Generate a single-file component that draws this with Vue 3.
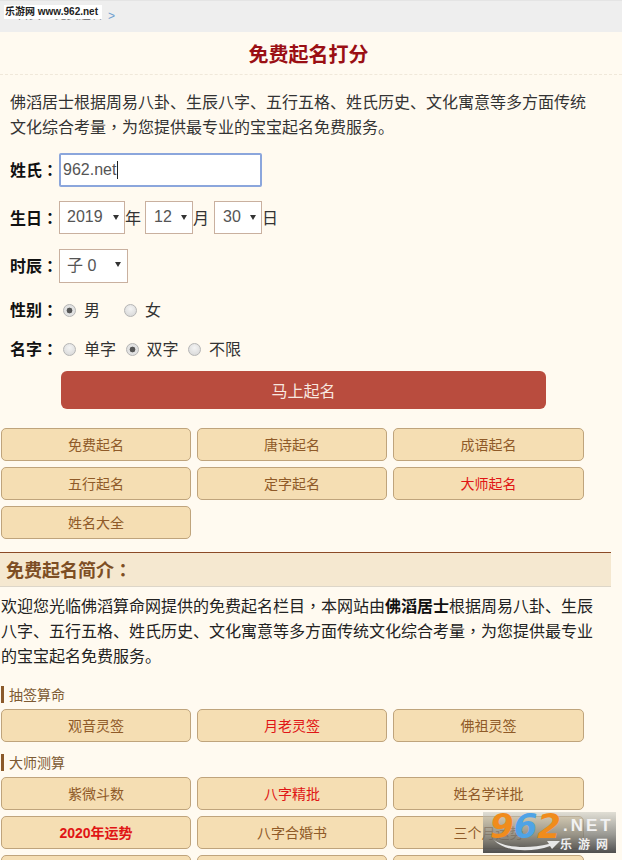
<script setup>
const nameTabs = [
  { text: '免费起名' }, { text: '唐诗起名' }, { text: '成语起名' },
  { text: '五行起名' }, { text: '定字起名' }, { text: '大师起名', hot: true },
  { text: '姓名大全' },
]
const drawTabs = [
  { text: '观音灵签' }, { text: '月老灵签', hot: true }, { text: '佛祖灵签' },
]
// last row is cut by the window, its labels can't be seen
const masterTabs = [
  { text: '紫微斗数' }, { text: '八字精批', hot: true }, { text: '姓名学详批' },
  { text: '2020年运势', hot: true, bold: true }, { text: '八字合婚书' }, { text: '三个月运势' },
  { text: '' }, { text: '' }, { text: '' },
]
</script>

<template>
  <div class="page">
    <div class="crumb">
      <span class="crumb__text">首页 &gt; 免费起名</span>
      <span class="crumb__arrow">&gt;</span>
      <div class="stamp">乐游网 www.962.net</div>
    </div>

    <h1 class="title">免费起名打分</h1>
    <p class="intro">佛滔居士根据周易八卦、生辰八字、五行五格、姓氏历史、文化寓意等多方面传统文化综合考量<span class="punc">，</span>为您提供最专业的宝宝起名免费服务。</p>

    <form class="form" @submit.prevent>
      <div class="row row--name">
        <b class="row__label">姓氏<span class="punc">：</span></b>
        <div class="name-box">
          <input class="name-input" value="962.net">
          <i class="caret"></i>
        </div>
      </div>
      <div class="row row--birth">
        <b class="row__label">生日<span class="punc">：</span></b>
        <span class="pick pick--year"><select><option>2019</option></select></span>
        <span class="unit">年</span>
        <span class="pick pick--month"><select><option>12</option></select></span>
        <span class="unit">月</span>
        <span class="pick pick--day"><select><option>30</option></select></span>
        <span class="unit">日</span>
      </div>
      <div class="row row--hour">
        <b class="row__label">时辰<span class="punc">：</span></b>
        <span class="pick pick--hour"><select><option>子 0</option></select></span>
      </div>
      <div class="row row--sex">
        <b class="row__label">性别<span class="punc">：</span></b>
        <label class="radio radio--wide"><input type="radio" name="sex" checked>男</label>
        <label class="radio"><input type="radio" name="sex">女</label>
      </div>
      <div class="row row--kind">
        <b class="row__label">名字<span class="punc">：</span></b>
        <label class="radio"><input type="radio" name="kind">单字</label>
        <label class="radio"><input type="radio" name="kind" checked>双字</label>
        <label class="radio"><input type="radio" name="kind">不限</label>
      </div>
      <button class="submit">马上起名</button>
    </form>

    <div class="tabs tabs--first">
      <a v-for="t in nameTabs" :key="t.text" class="tab" :class="{ 'tab--hot': t.hot }">{{ t.text }}</a>
    </div>

    <h2 class="section">免费起名简介<span class="punc">：</span></h2>
    <p class="about">欢迎您光临佛滔算命网提供的免费起名栏目<span class="punc">，</span>本网站由<b>佛滔居士</b>根据周易八卦、生辰八字、五行五格、姓氏历史、文化寓意等多方面传统文化综合考量<span class="punc">，</span>为您提供最专业的宝宝起名免费服务。</p>

    <h3 class="sub sub--first">抽签算命</h3>
    <div class="tabs">
      <a v-for="t in drawTabs" :key="t.text" class="tab" :class="{ 'tab--hot': t.hot }">{{ t.text }}</a>
    </div>

    <h3 class="sub">大师测算</h3>
    <div class="tabs">
      <a v-for="(t, i) in masterTabs" :key="i" class="tab" :class="{ 'tab--hot': t.hot, 'tab--bold': t.bold }">{{ t.text }}</a>
    </div>

    <!-- watermark in the corner -->
    <div class="logo">
      <div class="logo__num"><span class="o">9</span><span class="b">6</span><span class="o">2</span></div>
      <div class="logo__net">.NET</div>
      <svg class="logo__swoosh" width="72" height="14" viewBox="0 0 72 14">
        <path d="M5 1 C16 9 40 10 60 5 L58 2 L71 2 L63 10 L61 7 C42 14 16 13 5 1 Z" fill="#e8e8e8" />
      </svg>
      <div class="logo__cn">乐游网</div>
    </div>
  </div>
</template>

<style>
html, body {
  margin: 0;
  background: #fffaf0;
}
</style>

<style scoped>
.page {
  position: relative;
  height: 860px;
  overflow: hidden;
  background: #fffaf0;
  color: #222;
  font-family: "Liberation Sans", "Noto Sans CJK SC", sans-serif;
  font-size: 16px;
}

/* centred colon and comma, like the reference font */
.punc {
  font-family: "Noto Sans CJK TC", sans-serif;
  line-height: 0;
}

.crumb {
  position: relative;
  height: 32px;
  background: #eeeeee;
  border-top: 1px solid #e4e4e4;
  box-sizing: border-box;
  overflow: hidden;
}
.crumb__text {
  position: absolute;
  left: 17px;
  top: 6px;
  font-size: 12px;
  line-height: 16px;
  color: #777;
}
.crumb__arrow {
  position: absolute;
  left: 108px;
  top: 7px;
  font-size: 12px;
  line-height: 16px;
  color: #6f9fd0;
}
.stamp {
  position: absolute;
  left: 4px;
  top: 4px;
  width: 98px;
  height: 14px;
  background: #fff;
  color: #222;
  font-size: 10px;
  font-weight: bold;
  line-height: 14px;
  white-space: nowrap;
  text-indent: 1px;
}

.title {
  margin: 0;
  height: 43px;
  box-sizing: border-box;
  padding-right: 5px;
  border-bottom: 1px dashed #f0e8da;
  text-align: center;
  font-size: 20px;
  line-height: 46px;
  font-weight: bold;
  color: #9a0f14;
}

.intro {
  margin: 15px 22px 0 10px;
  line-height: 25px;
  color: #333;
}

.form {
  margin-top: 13px;
  padding-left: 10px;
}
.row {
  display: flex;
  align-items: center;
}
.row__label {
  width: 49px;
  flex: none;
  padding-bottom: 2px;
  color: #111;
}
.row--name {
  height: 34px;
}
.row--birth {
  margin-top: 14px;
  height: 33px;
}
.row--hour {
  margin-top: 15px;
  height: 34px;
}
.row--sex {
  margin-top: 17px;
  height: 20px;
}
.row--kind {
  margin-top: 19px;
  height: 20px;
}

.name-box {
  position: relative;
}
.name-input {
  display: block;
  width: 203px;
  height: 34px;
  box-sizing: border-box;
  padding: 0 2px;
  border: 2px solid #8ba6dc;
  border-radius: 2px;
  background: #fff;
  font: 16px "Liberation Sans", sans-serif;
  color: #555;
  outline: none;
}
.caret {
  position: absolute;
  left: 58px;
  top: 8px;
  width: 1px;
  height: 18px;
  background: #222;
}

.pick {
  position: relative;
  display: block;
  height: 100%;
  flex: none;
}
.pick select {
  display: block;
  width: 100%;
  height: 100%;
  box-sizing: border-box;
  padding: 0 0 2px 7px;
  border: 1px solid #c9b09f;
  border-radius: 0;
  background: #fff;
  appearance: none;
  font: 16px "Liberation Sans", "Noto Sans CJK SC", sans-serif;
  color: #555;
  outline: none;
}
.pick::after {
  content: "";
  position: absolute;
  right: 6px;
  top: 50%;
  margin-top: -3px;
  border-left: 3.5px solid transparent;
  border-right: 3.5px solid transparent;
  border-top: 5.5px solid #333;
}
.pick--year {
  width: 66px;
}
.pick--month {
  width: 48px;
  margin-left: 4px;
}
.pick--day {
  width: 48px;
  margin-left: 5px;
}
.pick--month select,
.pick--day select {
  padding-left: 8px;
}
.pick--hour {
  width: 69px;
}
.pick--hour::after {
  right: 7px;
  margin-top: -4px;
}
.unit {
  flex: none;
  width: 16px;
  padding-bottom: 2px;
  color: #333;
}

.radio {
  display: flex;
  align-items: center;
  padding-bottom: 2px;
  margin-right: 5.5px;
  color: #333;
}
.radio--wide {
  margin-right: 20px;
}
.radio input {
  appearance: none;
  width: 13px;
  height: 13px;
  flex: none;
  margin: 2px 8px 0 4px;
  border: 1px solid #b5b5b5;
  border-radius: 50%;
  background: radial-gradient(circle at 50% 35%, #f4f4f4, #d4d4d4);
  box-sizing: border-box;
}
.radio input:checked {
  background: radial-gradient(circle, #555 0, #555 2.6px, #e2e2e2 3.2px);
}

.submit {
  display: block;
  width: 485px;
  height: 38px;
  margin: 12px 0 0 51px;
  border: 0;
  border-radius: 6px;
  background: #b94c3e;
  color: #f8e8e0;
  font: 16px "Liberation Sans", "Noto Sans CJK SC", sans-serif;
}

.tabs {
  display: grid;
  grid-template-columns: 190px 190px 191px;
  grid-auto-rows: 33px;
  gap: 6px;
  margin-top: 6px;
  padding-left: 1px;
}
.tabs--first {
  margin-top: 19px;
}
.tab {
  display: block;
  box-sizing: border-box;
  border: 1px solid #bfa47c;
  border-radius: 5px;
  background: #f5deb3;
  color: #8f5a28;
  font-size: 14px;
  line-height: 32px;
  text-align: center;
}
.tab--hot {
  color: #e01515;
}
.tab--bold {
  font-weight: bold;
}

.section {
  margin: 13px 11px 0 0;
  height: 35px;
  box-sizing: border-box;
  padding-left: 6px;
  border-top: 1px solid #8b4a26;
  border-bottom: 1px solid #ddd6c8;
  background: #f5e8d0;
  color: #7d4e24;
  font-size: 18px;
  line-height: 37px;
  font-weight: bold;
}

.about {
  margin: 7px 16px 0 1px;
  line-height: 25px;
  color: #222;
}
.about b {
  color: #111;
}

.sub {
  margin: 12px 0 0 1px;
  height: 17px;
  padding-left: 5px;
  border-left: 3px solid #8b5a2b;
  color: #7d5a33;
  font-size: 14px;
  font-weight: normal;
  line-height: 18px;
}
.sub--first {
  margin-top: 17px;
}

.logo {
  position: absolute;
  left: 483px;
  top: 812px;
  width: 133px;
  height: 41px;
  background: linear-gradient(to bottom, rgba(200, 200, 190, 0.55), rgba(130, 130, 125, 0.8) 55%, rgba(70, 70, 70, 0.95));
}
.logo__num {
  position: absolute;
  left: 7px;
  top: -3px;
  font-size: 34px;
  line-height: 34px;
  font-weight: bold;
  font-style: italic;
  font-family: "DejaVu Sans", sans-serif;
  white-space: nowrap;
}
.logo__num .o {
  color: #f08c1c;
}
.logo__num .b {
  color: #4fa3e6;
}
.logo__net {
  position: absolute;
  left: 80px;
  top: 4px;
  font-size: 17px;
  line-height: 20px;
  font-weight: bold;
  letter-spacing: 3px;
  color: #f2f2f2;
}
.logo__swoosh {
  position: absolute;
  left: 6px;
  top: 27px;
}
.logo__cn {
  position: absolute;
  left: 77px;
  top: 25px;
  font-size: 12px;
  line-height: 16px;
  letter-spacing: 6px;
  font-weight: bold;
  white-space: nowrap;
  color: #efefef;
}
</style>
